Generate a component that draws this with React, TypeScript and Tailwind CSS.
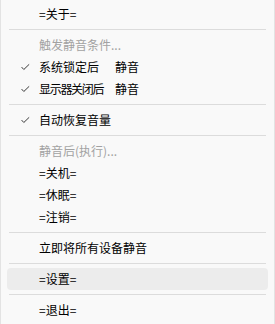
import React from "react";

const Check = () => (
  <svg width="9" height="7" viewBox="0 0 9 7" className="absolute left-[14px] top-1/2 -translate-y-1/2">
    <polyline points="0.6,3.6 2.8,6 8.2,0.8" fill="none" stroke="#3a3a3a" strokeWidth="1" />
  </svg>
);

const Sep = () => (
  <div className="h-[9px] flex items-center px-[8px]">
    <div className="h-px w-full bg-[#dcdcdc]" />
  </div>
);

type ItemProps = {
  children: React.ReactNode;
  gray?: boolean;
  checked?: boolean;
  hover?: boolean;
  extra?: string;
};

const Item = ({ children, gray, checked, hover, extra }: ItemProps) => (
  <div className={"relative h-[22px] mx-[6px] rounded-[4px] flex items-center pl-[32px] " + (hover ? "bg-[#ececec]" : "")}>
    {checked && <Check />}
    <span className={gray ? "text-[#a2a2a2]" : "text-[#000000]"}>{children}</span>
    {extra && <span className="absolute left-[108px] text-[#000000]">{extra}</span>}
  </div>
);

export default function App() {
  return (
    <div
      className="w-[275px] h-[324px] bg-[#f9f9f9] border-l border-r border-[#e3e3e3] pt-[3px] text-[12px] leading-none"
      style={{ fontFamily: '"Noto Sans CJK SC", "Noto Sans", sans-serif' }}
    >
      <Item>=关于=</Item>
      <Sep />
      <Item gray>触发静音条件...</Item>
      <Item checked extra="静音">系统锁定后</Item>
      <Item checked extra="静音"><span className="tracking-[-1.3px]">显示器关闭后</span></Item>
      <Sep />
      <Item checked>自动恢复音量</Item>
      <Sep />
      <Item gray>静音后(执行)...</Item>
      <Item>=关机=</Item>
      <Item>=休眠=</Item>
      <Item>=注销=</Item>
      <Sep />
      <Item>立即将所有设备静音</Item>
      <Sep />
      <Item hover>=设置=</Item>
      <Sep />
      <Item>=退出=</Item>
    </div>
  );
}
